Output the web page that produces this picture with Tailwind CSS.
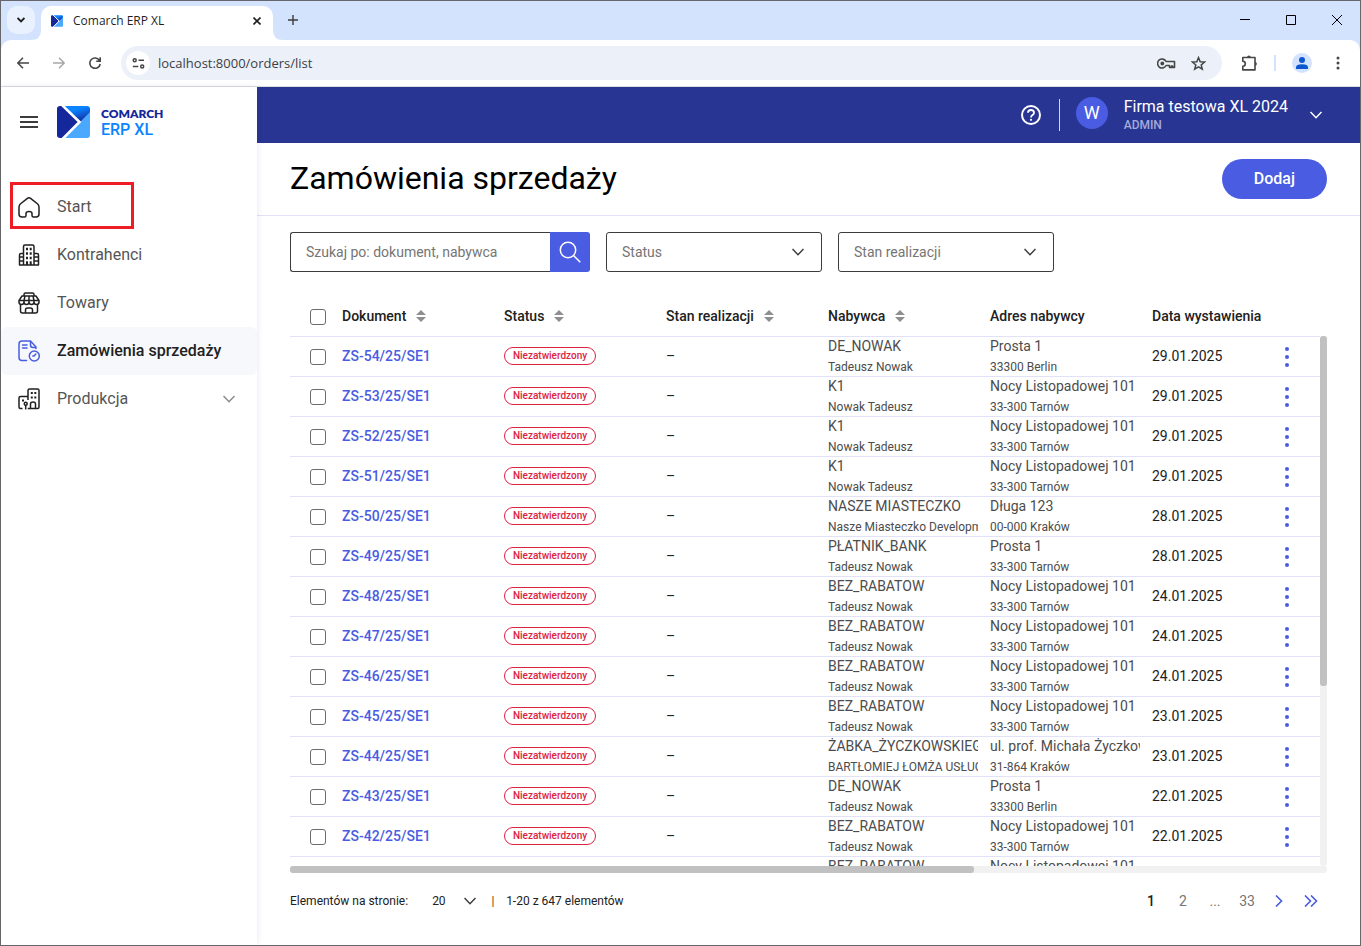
<!DOCTYPE html>
<html lang="pl">
<head>
<meta charset="utf-8">
<meta name="viewport" content="width=device-width, initial-scale=1">
<title>Comarch ERP XL</title>
<script src="https://cdn.jsdelivr.net/npm/@tailwindcss/browser@4"></script>
</head>
<body class="flex h-screen flex-col overflow-hidden border border-[#67676b] bg-white font-['Roboto',sans-serif] text-[#212121]">

<!-- Shared symbols -->
<svg class="absolute size-0" aria-hidden="true">
  <defs>
    <linearGradient id="brand-top" gradientUnits="userSpaceOnUse" x1="20" y1="2" x2="24" y2="16">
      <stop offset="0.1" stop-color="#0a84ff"/><stop offset="1" stop-color="#14289b"/>
    </linearGradient>
    <symbol id="brand" viewBox="0 0 33 32">
      <path d="M5 0H30Q33 0 33 3V8L24 16Z" fill="url(#brand-top)"/>
      <path d="M33 6V29Q33 32 30 32H7L24 15Z" fill="#4aa8ff"/>
      <path d="M3 0H6L22 16L6 32H3Q0 32 0 29V3Q0 0 3 0Z" fill="#14289b"/>
      <path d="M4.500 -1.500L22.500 16L5.500 33" fill="none" stroke="#fff" stroke-width="2.600"/>
    </symbol>
    <symbol id="chevron" viewBox="0 0 12 12"><path d="M0.500 3L6 8.700L11.500 3" fill="none" stroke="currentColor" stroke-width="1.500"/></symbol>
    <symbol id="sort" viewBox="0 0 10 12"><path d="M5 0L10 5H0ZM0 7H10L5 12Z" fill="#8f8f8f"/></symbol>
    <symbol id="dots" viewBox="0 0 4 20"><g fill="currentColor"><circle cx="2" cy="2" r="2"/><circle cx="2" cy="10" r="2"/><circle cx="2" cy="18" r="2"/></g></symbol>
  </defs>
</svg>

<!-- Browser tab strip -->
<div class="flex h-[39px] shrink-0 items-end bg-[#d3e3fd] font-['Open_Sans',sans-serif]">
  <button aria-label="Szukaj kart" class="mb-[6px] ml-[6px] flex size-7 items-center justify-center rounded-[10px] bg-[#e9f1fe]">
    <svg class="h-[6px] w-[8px]" viewBox="0 0 8 6" fill="none" stroke="#1f1f1f" stroke-width="1.800"><path d="M0.600 1L4 4.400L7.400 1"/></svg>
  </button>
  <div class="relative ml-[6px] flex h-[34px] w-[232px] items-center rounded-t-[10px] bg-white pr-2 pb-[5px] pl-[10px]">
    <svg class="absolute bottom-0 -left-[10px] size-[10px]" viewBox="0 0 10 10"><path d="M10 0V10H0Q10 10 10 0Z" fill="#fff"/></svg>
    <svg class="absolute -right-[10px] bottom-0 size-[10px]" viewBox="0 0 10 10"><path d="M0 0V10H10Q0 10 0 0Z" fill="#fff"/></svg>
    <svg class="size-3"><use href="#brand"/></svg>
    <span class="ml-[10px] flex-1 text-xs leading-4 text-[#1f1f1f]">Comarch ERP XL</span>
    <button aria-label="Zamknij kartę" class="flex size-4 items-center justify-center">
      <svg class="size-[8px]" viewBox="0 0 8 8" stroke="#1f1f1f" stroke-width="1.600"><path d="M0.500 0.500L7.500 7.500M7.500 0.500L0.500 7.500"/></svg>
    </button>
  </div>
  <button aria-label="Nowa karta" class="mb-[10px] ml-[10px] flex size-5 items-center justify-center">
    <svg class="size-[10px]" viewBox="0 0 10 10" stroke="#3c3c3c" stroke-width="1.400"><path d="M5 0V10M0 5H10"/></svg>
  </button>
  <div class="mb-[10px] ml-auto flex items-center gap-[26px] pr-[13px]">
    <button aria-label="Minimalizuj" class="flex size-5 items-center justify-center"><svg class="size-[10px]" viewBox="0 0 10 10"><path d="M0 4H10V5H0Z"/></svg></button>
    <button aria-label="Maksymalizuj" class="flex size-5 items-center justify-center"><svg class="size-[10px]" viewBox="0 0 10 10" fill="none" stroke="#000"><path d="M0.500 0.500H9.500V9.500H0.500Z"/></svg></button>
    <button aria-label="Zamknij" class="flex size-5 items-center justify-center"><svg class="size-[10px]" viewBox="0 0 10 10" stroke="#000"><path d="M0 0L10 10M10 0L0 10"/></svg></button>
  </div>
</div>

<!-- Browser toolbar -->
<div class="shrink-0 bg-[#d3e3fd]">
<div class="flex h-[47px] items-center rounded-t-[10px] border-b border-[#dcdcdc] bg-white pl-3">
  <button aria-label="Wstecz" class="flex size-5 items-center justify-center"><svg class="size-3" viewBox="0 0 12 12" fill="none" stroke="#454746" stroke-width="1.500"><path d="M12 6H1M6 0.700L0.800 6L6 11.300"/></svg></button>
  <button aria-label="Dalej" class="ml-4 flex size-5 items-center justify-center"><svg class="size-3" viewBox="0 0 12 12" fill="none" stroke="#a6a8a7" stroke-width="1.500"><path d="M0 6H11M6 0.700L11.200 6L6 11.300"/></svg></button>
  <button aria-label="Odśwież" class="ml-4 flex size-5 items-center justify-center"><svg class="size-3" viewBox="0 0 12 12" fill="none" stroke="#454746" stroke-width="1.600"><path d="M10.600 3.600A5.200 5.200 0 1 0 11.200 7M11.200 0.200V4.200H7.200"/></svg></button>
  <div class="ml-4 flex h-[34px] flex-1 items-center rounded-full bg-[#ecf0f9] pr-4 pl-[5px]">
    <button aria-label="Informacje o witrynie" class="flex size-6 items-center justify-center rounded-full bg-white">
      <svg class="h-[11px] w-[13px]" viewBox="0 0 13 11" fill="none" stroke="#454746" stroke-width="1.500"><circle cx="2.700" cy="2.300" r="1.500"/><path d="M6.500 2.300H12M0.800 8.500H6.300"/><circle cx="10.200" cy="8.500" r="1.500"/></svg>
    </button>
    <input aria-label="Adres" value="localhost:8000/orders/list" class="ml-2 h-6 min-w-0 flex-1 bg-transparent font-['Open_Sans',sans-serif] text-[13px] leading-6 text-[#3c3f44] outline-none">
    <button aria-label="Hasła"><svg class="h-[11px] w-[19px]" viewBox="0 0 19 11" fill="none" stroke="#454746" stroke-width="1.600"><path d="M9.100 3.500A4.500 4.500 0 1 0 9.100 7.500H12.500V9.400H14.500V8H15.500V9.400H17.500V3.500Z" stroke-linejoin="round"/><circle cx="5.300" cy="5.500" r="1.900" fill="#454746" stroke="none"/></svg></button>
    <button aria-label="Dodaj zakładkę" class="ml-[15px]"><svg class="size-[15px]" viewBox="0 0 15 15" fill="none" stroke="#454746" stroke-width="1.500"><path d="M7.500 1.600L9.200 5.700L13.600 6L10.200 8.900L11.300 13.200L7.500 10.900L3.700 13.200L4.800 8.900L1.400 6L5.800 5.700Z"/></svg></button>
  </div>
  <button aria-label="Rozszerzenia" class="ml-[19px]"><svg class="h-4 w-[17px]" viewBox="0 0 17 16" fill="none" stroke="#454746" stroke-width="1.600"><path d="M1.800 2.500H14V14.900H1.800V11.200A2.400 2.400 0 0 0 1.800 6.200Z" stroke-linejoin="round"/><path d="M6 2.500A1.900 1.900 0 0 1 9.800 2.500ZM14 6.900A1.900 1.900 0 0 1 14 10.700Z" fill="#454746" stroke="none"/></svg></button>
  <span class="ml-4 h-4 w-[2px] bg-[#d3e3fd]"></span>
  <button aria-label="Profil" class="ml-4 flex size-5 items-center justify-center rounded-full bg-[#d3e3fd]"><svg class="size-3" viewBox="0 0 12 12" fill="#0b57d0"><circle cx="6" cy="3" r="3"/><path d="M0 12V10.500Q0 7.300 6 7.300T12 10.500V12Z"/></svg></button>
  <button aria-label="Menu przeglądarki" class="mr-[20px] ml-6"><svg class="h-[14px] w-[4px]" viewBox="0 0 4 14" fill="#454746"><circle cx="2" cy="2" r="1.500"/><circle cx="2" cy="7" r="1.500"/><circle cx="2" cy="12" r="1.500"/></svg></button>
</div>
</div>

<!-- Application -->
<div class="flex min-h-0 flex-1">
  <aside class="relative z-10 w-64 shrink-0 bg-white shadow-[0_0_6px_rgba(40,53,147,0.12)]">
    <div class="flex h-24 items-start gap-[19px] pt-[19px] pl-[19px]">
      <button aria-label="Menu" class="flex h-8 items-center"><svg class="h-3 w-[18px]" viewBox="0 0 18 12" fill="#3c3c3c"><path d="M0 0H18V2H0ZM0 5H18V7H0ZM0 10H18V12H0Z"/></svg></button>
      <a href="#" class="flex items-center gap-[11px]">
        <svg class="h-8 w-[33px]"><use href="#brand"/></svg>
        <span class="flex flex-col"><span class="font-['Lato',sans-serif] text-xs leading-4 font-extrabold text-[#14289b]">COMARCH</span><span class="text-base leading-4 font-medium text-[#0a84ff]">ERP XL</span></span>
      </a>
    </div>
    <nav class="relative text-base text-[#555]">
      <span class="pointer-events-none absolute -top-px left-[9px] z-10 h-[47px] w-[124px] border-[3px] border-[#ee1c25]"></span>
      <a href="#" class="flex h-12 items-center gap-4 pl-4"><svg class="size-6 text-[#212121]" viewBox="0 0 24 24" fill="none" stroke="currentColor" stroke-width="1.500" stroke-linejoin="round"><path d="M2 12.200Q2 10.300 3.300 9L10.400 3.300Q12 2 13.600 3.300L20.700 9Q22 10.300 22 12.200V19Q22 22 19 22H16.500Q15 22 15 20.500V18.500Q15 16.500 12 16.500T9 18.500V20.500Q9 22 7.500 22H5Q2 22 2 19Z"/></svg>Start</a>
      <a href="#" class="flex h-12 items-center gap-4 pl-4"><svg class="size-6 text-[#212121]" viewBox="0 0 24 24" fill="none" stroke="currentColor" stroke-width="1.500"><path d="M6.500 22V3.500Q6.500 2 8 2H15.500Q17 2 17 3.500V22M2.500 22V12Q2.500 10.500 4 10.500H6.500M17 10.500H20Q21.500 10.500 21.500 12V22M2 22H22M2.500 14H6.500M2.500 18H6.500M17 14H21.500M17 18H21.500"/><path d="M9 6H11M12.700 6H14.700M9 10.500H11M12.700 10.500H14.700M9 15H11M12.700 15H14.700" stroke-width="2.400"/><path d="M10 22V18.200M13.700 22V18.200" stroke-width="2"/></svg>Kontrahenci</a>
      <a href="#" class="flex h-12 items-center gap-4 pl-4"><svg class="size-6 text-[#212121]" viewBox="0 0 24 24" fill="none" stroke="currentColor" stroke-width="1.500" stroke-linejoin="round"><path d="M7 5V3.500Q7 2 8.500 2H15.500Q17 2 17 3.500V5"/><path d="M5 5H19L22 9.500V11A2.500 2.500 0 0 1 17 11A2.500 2.500 0 0 1 12 11A2.500 2.500 0 0 1 7 11A2.500 2.500 0 0 1 2 11V9.500ZM2 9.500H22M8 5L7 9.500V11M12 5V11M16 5L17 9.500V11"/><path d="M3.500 13.500V20Q3.500 22 5.500 22H18.500Q20.500 22 20.500 20V13.500M8.500 22V19Q8.500 17 10.500 17H13.500Q15.500 17 15.500 19V22"/></svg>Towary</a>
      <a href="#" aria-current="page" class="flex h-12 items-center gap-4 rounded-md bg-[#f7f8fb] pl-4 font-medium text-[#212121]"><svg class="size-6 text-[#4a5ce2]" viewBox="0 0 24 24" fill="none" stroke="currentColor" stroke-width="1.500" stroke-linecap="round" stroke-linejoin="round"><path d="M9.500 21.500H5Q2 21.500 2 18.500V5Q2 2 5 2H13.500L19 8V9.500M13.500 2V6Q13.500 8.500 16 8.500H19M5.500 6H10M5.500 9H10"/><circle cx="17.300" cy="17" r="5"/><path d="M18.800 15L17 17H15.800"/></svg>Zamówienia sprzedaży</a>
      <a href="#" class="flex h-12 items-center gap-4 pr-[22px] pl-4"><svg class="size-6 text-[#212121]" viewBox="0 0 24 24" fill="none" stroke="currentColor" stroke-width="1.500"><path d="M11 9.500V3.500Q11 2 12.500 2H20.500Q22 2 22 3.500V20Q22 21.500 20.500 21.500H13.500V17Q13.500 15 16 15T18.500 17V21.500M11 9.500H3.500Q2 9.500 2 11V20Q2 21.500 3.500 21.500H5.500M11 9.500V13"/><path d="M13.800 6H15.800M17.300 6H19.300M13.800 10.500H15.800M17.300 10.500H19.300M5 13.500H7" stroke-width="2"/><path d="M8.700 22.500V18M10.700 21.500H13"/><circle cx="8.700" cy="16.800" r="1.500"/></svg><span class="flex-1">Produkcja</span><svg class="size-3 text-[#8a8a8a]"><use href="#chevron"/></svg></a>
    </nav>
  </aside>

  <div class="flex min-w-0 flex-1 flex-col">
    <header class="flex h-14 shrink-0 items-center justify-end bg-[#283593] pr-[38px] text-white">
      <button aria-label="Pomoc"><svg class="size-5" viewBox="0 0 20 20" fill="none" stroke="#fff" stroke-width="2"><circle cx="10" cy="10" r="9"/><path d="M7 7.800Q7 5 10 5T13 7.700Q13 9 11.500 10.100T10 12.600" stroke-width="1.800"/><circle cx="10" cy="14.800" r="1.100" fill="#fff" stroke="none"/></svg></button>
      <span class="ml-[18px] h-8 w-px bg-white/80"></span>
      <span class="mb-1 ml-4 flex size-8 items-center justify-center rounded-full bg-[#4a5ce2] text-lg leading-none">W</span>
      <div class="ml-4 flex flex-col">
        <span class="text-base leading-5">Firma testowa XL 2024</span>
        <span class="text-xs leading-4 font-medium text-[#a5abd8]">ADMIN</span>
      </div>
      <button aria-label="Menu użytkownika" class="ml-[22px]"><svg class="size-3"><use href="#chevron"/></svg></button>
    </header>

    <div class="flex h-[73px] shrink-0 items-center justify-between border-b border-[#e1e1f7] px-[33px]">
      <h1 class="pb-0.5 text-[32px] leading-10 text-black">Zamówienia sprzedaży</h1>
      <button class="h-10 rounded-full bg-[#4a5ce2] px-8 text-base font-medium text-white">Dodaj</button>
    </div>

    <main class="flex min-h-0 flex-1 flex-col px-[33px] pt-4">
      <form class="flex shrink-0 gap-4 text-sm text-[#757575]">
        <div class="flex h-10 w-[300px]">
          <input type="search" aria-label="Szukaj" placeholder="Szukaj po: dokument, nabywca" class="min-w-0 flex-1 rounded-l-[3px] border border-r-0 border-[#3c3c3c] px-[15px] outline-none placeholder:text-[#757575]">
          <button type="button" aria-label="Szukaj" class="flex w-10 items-center justify-center rounded-r-[3px] bg-[#4a5ce2]"><svg class="size-[22px]" viewBox="0 0 22 22" fill="none" stroke="#fff" stroke-width="1.500"><circle cx="9" cy="9" r="7.700"/><path d="M14.500 14.500L21.300 21.300"/></svg></button>
        </div>
        <div class="relative w-[216px]">
          <select aria-label="Status" class="h-10 w-full appearance-none rounded-[3px] border border-[#3c3c3c] bg-white px-[15px]"><option>Status</option></select>
          <svg class="pointer-events-none absolute top-[14px] right-[18px] size-3 text-[#3c3c3c]"><use href="#chevron"/></svg>
        </div>
        <div class="relative w-[216px]">
          <select aria-label="Stan realizacji" class="h-10 w-full appearance-none rounded-[3px] border border-[#3c3c3c] bg-white px-[15px]"><option>Stan realizacji</option></select>
          <svg class="pointer-events-none absolute top-[14px] right-[18px] size-3 text-[#3c3c3c]"><use href="#chevron"/></svg>
        </div>
      </form>

      <div class="mt-6 grid min-h-0 flex-1 grid-cols-[minmax(0,1fr)_7px] grid-rows-[minmax(0,1fr)_7px]">
        <div class="overflow-hidden">
          <table class="w-full table-fixed text-left text-sm">
            <colgroup><col class="w-[52px]"><col class="w-[162px]"><col class="w-[162px]"><col class="w-[162px]"><col class="w-[162px]"><col class="w-[162px]"><col><col class="w-14"></colgroup>
            <thead>
              <tr class="h-10 border-b border-[#e1e1f7] whitespace-nowrap [&_th]:p-0 [&_th]:font-medium">
                <th><input type="checkbox" aria-label="Zaznacz wszystkie" class="mt-0.5 ml-5 block size-4 appearance-none rounded-[3px] border border-[#6b6b6b] bg-white"></th>
                <th><button class="flex items-center gap-[10px]">Dokument<svg class="h-3 w-[10px]"><use href="#sort"/></svg></button></th>
                <th><button class="flex items-center gap-[10px]">Status<svg class="h-3 w-[10px]"><use href="#sort"/></svg></button></th>
                <th><button class="flex items-center gap-[10px]">Stan realizacji<svg class="h-3 w-[10px]"><use href="#sort"/></svg></button></th>
                <th><button class="flex items-center gap-[10px]">Nabywca<svg class="h-3 w-[10px]"><use href="#sort"/></svg></button></th>
                <th>Adres nabywcy</th>
                <th>Data wystawienia</th>
                <th aria-label="Akcje"></th>
              </tr>
            </thead>
            <tbody id="orders"></tbody>
          </table>
        </div>
        <div class="mt-10 rounded-[3px] bg-[#f1f1f1]"><div class="h-[66%] rounded-[3px] bg-[#c1c1c1]"></div></div>
        <div class="col-span-2 rounded-[3px] bg-[#f1f1f1]"><div class="h-full w-[66%] rounded-[3px] bg-[#c1c1c1]"></div></div>
      </div>

      <footer class="flex h-[72px] shrink-0 items-start justify-between pt-[18px] text-xs">
        <div class="flex h-5 items-center">
          <label for="page-size">Elementów na stronie:</label>
          <div class="relative ml-6 w-12">
            <select id="page-size" class="w-full appearance-none bg-transparent text-xs"><option>20</option></select>
            <svg class="pointer-events-none absolute top-[2px] right-1 size-3 text-[#3c3c3c]"><use href="#chevron"/></svg>
          </div>
          <span class="ml-3 h-[11px] w-[2px] bg-[#e0a050]"></span>
          <span class="ml-3">1-20 z 647 elementów</span>
        </div>
        <nav aria-label="Stronicowanie" class="flex h-5 items-center text-sm text-[#757575]">
          <a href="#" aria-current="page" class="w-8 text-center font-medium text-[#212121]">1</a>
          <a href="#" class="w-8 text-center">2</a>
          <span class="w-8 text-center">...</span>
          <a href="#" class="w-8 text-center">33</a>
          <a href="#" aria-label="Następna" class="flex w-8 justify-center text-[#4a5ce2]"><svg class="h-3 w-[14px]" viewBox="0 0 14 12" fill="none" stroke="currentColor" stroke-width="1.600"><path d="M4 0.500L9.500 6L4 11.500"/></svg></a>
          <a href="#" aria-label="Ostatnia" class="flex w-8 justify-center text-[#4a5ce2]"><svg class="h-3 w-[14px]" viewBox="0 0 14 12" fill="none" stroke="currentColor" stroke-width="1.600"><path d="M1 0.500L6.500 6L1 11.500M7 0.500L12.500 6L7 11.500"/></svg></a>
        </nav>
      </footer>
    </main>
  </div>
</div>

<script>
const nowak = ['DE_NOWAK', 'Tadeusz Nowak', 'Prosta 1', '33300 Berlin'];
const k1 = ['K1', 'Nowak Tadeusz', 'Nocy Listopadowej 101', '33-300 Tarnów'];
const bez = ['BEZ_RABATOW', 'Tadeusz Nowak', 'Nocy Listopadowej 101', '33-300 Tarnów'];
const rows = [
  [54, nowak, '29.01.2025'],
  [53, k1, '29.01.2025'],
  [52, k1, '29.01.2025'],
  [51, k1, '29.01.2025'],
  [50, ['NASZE MIASTECZKO', 'Nasze Miasteczko Development', 'Długa 123', '00-000 Kraków'], '28.01.2025'],
  [49, ['PŁATNIK_BANK', 'Tadeusz Nowak', 'Prosta 1', '33-300 Tarnów'], '28.01.2025'],
  [48, bez, '24.01.2025'],
  [47, bez, '24.01.2025'],
  [46, bez, '24.01.2025'],
  [45, bez, '23.01.2025'],
  [44, ['ŻABKA_ŻYCZKOWSKIEGO', 'BARTŁOMIEJ ŁOMŻA USŁUGI', 'ul. prof. Michała Życzkowskiego', '31-864 Kraków'], '23.01.2025'],
  [43, nowak, '22.01.2025'],
  [42, bez, '22.01.2025'],
  [41, bez, '22.01.2025'],
];
const pair = (a, b) => `<td class="p-0 pr-3 text-[#4c4c4c]"><div class="h-[19px] overflow-hidden text-sm leading-[19px] whitespace-nowrap">${a}</div><div class="h-5 overflow-hidden text-xs leading-[22px] whitespace-nowrap">${b}</div></td>`;
document.getElementById('orders').innerHTML = rows.map(([n, [name, person, street, city], date]) => `
<tr class="h-10 border-b border-[#e1e1f7]">
  <td class="p-0"><input type="checkbox" aria-label="Zaznacz ZS-${n}/25/SE1" class="mt-0.5 ml-5 block size-4 appearance-none rounded-[3px] border border-[#6b6b6b] bg-white"></td>
  <td class="p-0"><a href="#" class="font-medium text-[#4a5ce2]">ZS-${n}/25/SE1</a></td>
  <td class="p-0"><span class="flex h-[18px] w-[92px] items-center justify-center rounded-full border border-[#dc2342] text-[10px] leading-none font-medium text-[#dc2342]">Niezatwierdzony</span></td>
  <td class="p-0">–</td>
  ${pair(name, person)}
  ${pair(street, city)}
  <td class="p-0">${date}</td>
  <td class="p-0 pr-[10px]"><button aria-label="Akcje ZS-${n}/25/SE1" class="mx-auto mt-0.5 block text-[#4a5ce2]"><svg class="h-5 w-1"><use href="#dots"/></svg></button></td>
</tr>`).join('');
</script>
</body>
</html>
